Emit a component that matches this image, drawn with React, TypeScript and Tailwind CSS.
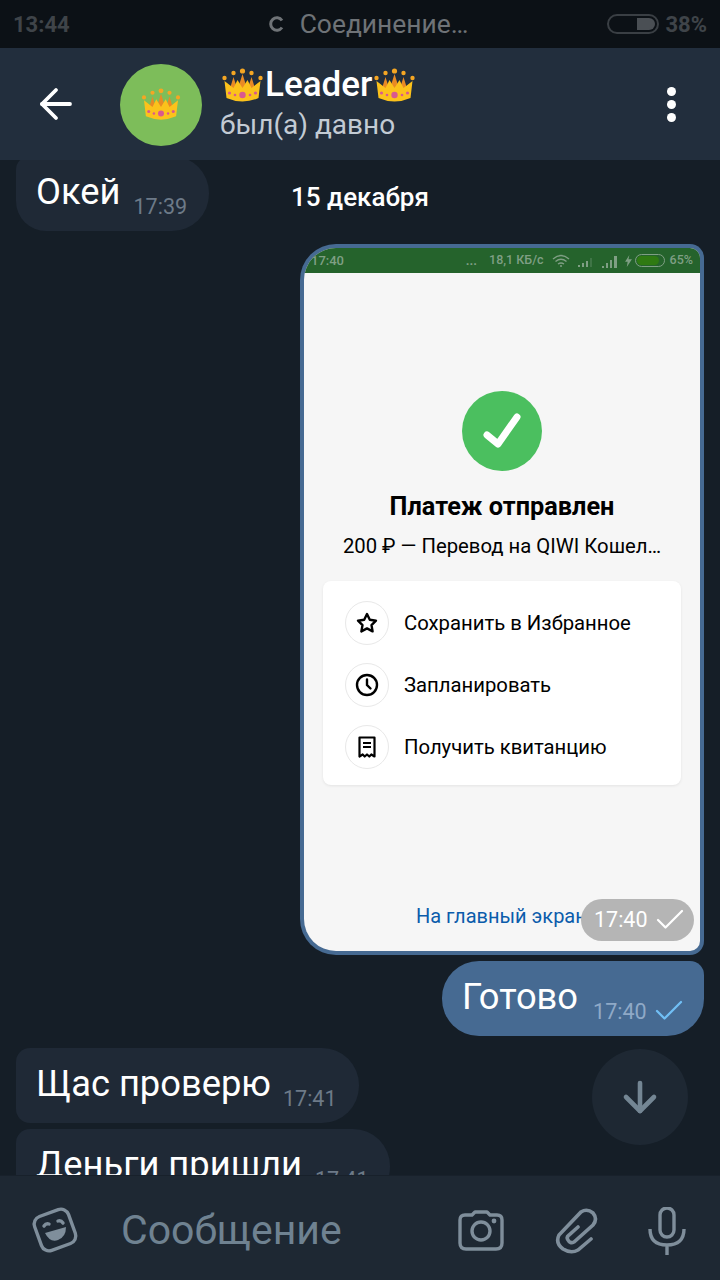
import { ArrowDown, ArrowLeft, Check } from "lucide-react";

const Crown = ({ className }: { className: string }) => (
  <svg viewBox="0 0 44 36" className={className}>
    <g fill="#f5a623">
      <circle cx="4" cy="10" r="2.2" />
      <circle cx="13" cy="5" r="2.2" />
      <circle cx="22" cy="3" r="2.6" />
      <circle cx="31" cy="5" r="2.2" />
      <circle cx="40" cy="10" r="2.2" />
    </g>
    <path d="M13 9 17 22H9zM31 9 35 22H27zM22 6 27 22H17z" fill="#e98a24" />
    <path d="M4 13 13 20 17 12 22 20 27 12 31 20 40 13 38 30Q22 37 6 30Z" fill="#fcc21b" />
    <circle cx="22" cy="27" r="3.2" fill="#d9598f" />
    <g fill="#d9598f">
      <circle cx="9" cy="25" r="1.6" />
      <circle cx="14.5" cy="27" r="1.3" />
      <circle cx="29.5" cy="27" r="1.3" />
      <circle cx="35" cy="25" r="1.6" />
    </g>
  </svg>
);

const Time = ({ value, className }: { value: string; className: string }) => (
  <span className={`text-[21.5px] leading-none ${className}`}>{value}</span>
);

const PayRow = ({ label, children }: { label: string; children: React.ReactNode }) => (
  <div className="flex h-[44px] items-center gap-[15px]">
    <div className="flex h-[44px] w-[44px] items-center justify-center rounded-full border border-[#e8e8e8]">
      {children}
    </div>
    <span className="text-[20.3px] text-black">{label}</span>
  </div>
);

const PaymentShot = () => (
  <div className="relative ml-[300px] mt-[13px] h-[711px] w-[404px] shrink-0 rounded-tl-[36px] rounded-tr-[14px] rounded-bl-[36px] rounded-br-[14px] bg-[#466a92] p-[4px]">
    <div className="flex h-full flex-col overflow-hidden rounded-tl-[32px] rounded-tr-[10px] rounded-bl-[32px] rounded-br-[10px] bg-[#f6f6f6]">
      {/* Status bar of the phone in the screenshot */}
      <div className="flex h-[25px] shrink-0 items-center bg-[#25632c] pl-[7px] pr-[7px] text-[13px] font-medium text-[#7f9f84]">
        <span>17:40</span>
        <span className="ml-auto font-bold">...</span>
        <span className="ml-[12px] text-[12.5px]">18,1 КБ/с</span>
        <svg viewBox="0 0 18 14" className="ml-[8px] h-[14px] w-[18px]" fill="none" stroke="#7f9f84" strokeWidth="1.4">
          <path d="M1 5Q9-2 17 5M3.5 7.5Q9 3 14.5 7.5M6 10Q9 8 12 10" />
          <circle cx="9" cy="12" r="1" fill="#7f9f84" stroke="none" />
        </svg>
        <svg viewBox="0 0 18 12" className="ml-[7px] h-[12px] w-[18px]" fill="#7f9f84">
          <path d="M1 10h2v2H1zM5 8h2v4H5zM9 6h2v6H9z" />
          <path d="M13 3h2v9h-2z" opacity="0.3" />
        </svg>
        <svg viewBox="0 0 18 14" className="ml-[6px] h-[14px] w-[18px]" fill="#7f9f84">
          <path d="M1 12h2v2H1zM5 9h2v5H5zM9 6h2v8H9zM13 2h3v12h-3z" />
        </svg>
        <svg viewBox="0 0 8 14" className="ml-[6px] h-[12px] w-[7px]" fill="#7f9f84">
          <path d="M5 0 0 8h3l-1 6 6-9H4z" />
        </svg>
        <div className="ml-[3px] h-[13px] w-[30px] shrink-0 rounded-full border border-[#7f9f84] p-[1px]">
          <div className="h-full w-[22px] rounded-full bg-[#2f7a12]" />
        </div>
        <span className="ml-[5px] text-[12.5px]">65%</span>
      </div>

      <div className="flex flex-1 flex-col items-center">
        <div className="mt-[118px] h-[80px] w-[80px] rounded-full bg-[#4bbf5f]">
          <svg viewBox="0 0 80 80" className="h-[80px] w-[80px]" fill="none" stroke="#fff" strokeWidth="7" strokeLinecap="round" strokeLinejoin="round">
            <path d="M25 44l11 9 19-27" />
          </svg>
        </div>
        <p className="mt-[20px] text-[25.3px] leading-[32px] font-bold text-black">Платеж отправлен</p>
        <p className="mt-[9px] text-[20.3px] leading-[28px] text-black">200 ₽ — Перевод на QIWI Кошел…</p>

        <div className="mt-[21px] flex h-[204px] w-[358px] flex-col gap-[18px] rounded-lg bg-white px-[22px] py-[20px] shadow-[0_1px_3px_rgba(0,0,0,0.08)]">
          <PayRow label="Сохранить в Избранное">
            <svg viewBox="0 0 24 24" className="h-[24px] w-[24px]" fill="none" stroke="#000" strokeWidth="2.4" strokeLinejoin="round">
              <path d="M12 3l2.8 5.8 6.2.9-4.5 4.4 1.1 6.3-5.6-3-5.6 3 1.1-6.3L3 9.7l6.2-.9z" />
            </svg>
          </PayRow>
          <PayRow label="Запланировать">
            <svg viewBox="0 0 24 24" className="h-[24px] w-[24px]" fill="none" stroke="#000" strokeWidth="2.4" strokeLinecap="round">
              <circle cx="12" cy="12" r="10" />
              <path d="M12 6.5V12l3.5 3.5" />
            </svg>
          </PayRow>
          <PayRow label="Получить квитанцию">
            <svg viewBox="0 0 24 24" className="h-[24px] w-[24px]" fill="none" stroke="#000" strokeWidth="2.2">
              <path d="M4.5 2.5h15v19l-3.2-2-2 2-2.3-2-2.3 2-2-2-3.2 2z" strokeLinejoin="round" />
              <path d="M8 8h8M8 12h8" />
            </svg>
          </PayRow>
        </div>

        <p className="mt-[117px] ml-[112px] self-start text-[20px] leading-[28px] whitespace-nowrap text-[#0b5cab]">
          На главный экран
        </p>
      </div>
    </div>

    {/* Time pill over the picture */}
    <div className="absolute right-[10px] bottom-[14px] flex h-[42px] w-[113px] items-center gap-[4px] rounded-full bg-[#b5b5b5] pl-[13px]">
      <Time value="17:40" className="text-white" />
      <Check className="h-[36px] w-[36px] text-white" strokeWidth={1.5} />
    </div>
  </div>
);

export default function App() {
  return (
    <div className="flex h-[1280px] w-[720px] flex-col overflow-hidden bg-[#151e27] font-['Roboto',sans-serif]">
      {/* Phone status bar */}
      <div className="relative flex h-[48px] shrink-0 items-center bg-[#0c1116] pl-[13px] pr-[13px]">
        <span className="text-[22px] font-bold text-[#3f4449]">13:44</span>
        <div className="ml-[198px] flex items-center gap-[16px] text-[#6f7377]">
          <svg viewBox="0 0 16 16" className="h-[16px] w-[16px]" fill="none" stroke="#6f7377" strokeWidth="3">
            <path d="M14 4.5A6.2 6.2 0 1 0 14 11.5" />
          </svg>
          <span className="text-[26.4px] leading-none">Соединение…</span>
        </div>
        <div className="ml-auto flex items-center gap-[6px]">
          <div className="flex h-[20px] w-[52px] justify-end rounded-full border-2 border-[#3a3f44] p-[2px]">
            <div className="h-full w-[18px] rounded-r-full bg-[#4a4f54]" />
          </div>
          <span className="text-[22px] font-bold text-[#3f4449]">38%</span>
        </div>
      </div>

      {/* Chat header */}
      <div className="z-10 flex h-[112px] shrink-0 items-center bg-[#222e3d]">
        <ArrowLeft className="ml-[32px] h-[48px] w-[48px] text-white" strokeWidth={1.9} />
        <div className="mt-[2px] ml-[40px] flex h-[82px] w-[82px] items-center justify-center rounded-full bg-[#7dbd5a]">
          <Crown className="h-[34px] w-[42px]" />
        </div>
        <div className="ml-[18px] flex flex-col self-start pt-[16px]">
          <div className="flex h-[40px] items-center">
            <Crown className="mt-[3px] h-[36px] w-[45px]" />
            <span className="text-[35px] leading-none font-medium text-white">Leader</span>
            <Crown className="mt-[3px] h-[36px] w-[45px]" />
          </div>
          <span className="mt-[3px] text-[28px] leading-[36px] text-[#c3cbd4]">был(а) давно</span>
        </div>
        <div className="ml-auto mr-[44px] flex flex-col gap-[4px]">
          <div className="h-[9px] w-[9px] rounded-full bg-white" />
          <div className="h-[9px] w-[9px] rounded-full bg-white" />
          <div className="h-[9px] w-[9px] rounded-full bg-white" />
        </div>
      </div>

      {/* Messages */}
      <div className="relative flex min-h-0 flex-1 flex-col overflow-hidden">
        <div className="-mt-[4px] ml-[16px] flex h-[75px] w-[193px] shrink-0 items-center rounded-tl-[14px] rounded-tr-[37px] rounded-bl-[30px] rounded-br-[37px] bg-[#1f2936] pl-[20px]">
          <span className="-mt-[2px] text-[36.3px] leading-none text-white">Окей</span>
          <Time value="17:39" className="mt-[26px] ml-[13px] text-[#6d7a88]" />
        </div>

        <PaymentShot />

        <div className="mt-[6px] ml-[442px] flex h-[75px] w-[262px] shrink-0 items-center rounded-tl-[37px] rounded-tr-[14px] rounded-bl-[37px] rounded-br-[37px] bg-[#466a92] pl-[20px]">
          <span className="-mt-[2px] text-[36.3px] leading-none text-white">Готово</span>
          <Time value="17:40" className="mt-[26px] ml-[15px] text-[#8fa9c7]" />
          <Check className="mt-[24px] ml-[4px] h-[36px] w-[36px] text-[#71bff5]" strokeWidth={1.5} />
        </div>

        <div className="mt-[12px] ml-[16px] flex h-[75px] w-[343px] shrink-0 items-center rounded-[14px] rounded-tr-[37px] rounded-br-[37px] bg-[#1f2936] pl-[20px]">
          <span className="-mt-[2px] text-[36.3px] leading-none text-white">Щас проверю</span>
          <Time value="17:41" className="mt-[26px] ml-[12px] text-[#6d7a88]" />
        </div>

        <div className="mt-[6px] ml-[16px] flex h-[75px] w-[374px] shrink-0 items-center rounded-[14px] rounded-tr-[37px] rounded-br-[37px] bg-[#1f2936] pl-[20px]">
          <span className="-mt-[2px] text-[36.3px] leading-none text-white">Деньги пришли</span>
          <Time value="17:41" className="mt-[26px] ml-[13px] text-[#6d7a88]" />
        </div>

        {/* Floating date */}
        <span className="absolute top-[22px] left-0 w-full text-center text-[26px] leading-[30px] font-medium text-white">
          15 декабря
        </span>

        {/* Scroll down button */}
        <div className="absolute top-[889px] left-[592px] flex h-[96px] w-[96px] items-center justify-center rounded-full bg-[#1e2833]">
          <ArrowDown className="h-[48px] w-[48px] text-[#748694]" strokeWidth={2.3} />
        </div>
      </div>

      {/* Input bar */}
      <div className="z-10 flex h-[105px] shrink-0 items-center border-t border-[#18212b] bg-[#1e2833]">
        <svg viewBox="0 0 48 48" className="mt-[4px] ml-[31px] h-[48px] w-[48px] shrink-0" fill="none" stroke="#7f8e9b" strokeWidth="3.4" strokeLinecap="round">
          <rect x="6" y="6" width="36" height="36" rx="8" transform="rotate(-20 24 24)" />
          <path d="M13 20q2-3 5-2M27 15q3-1 5 2" />
          <path d="M14 27l21-6q0 10-8 13t-13-7z" fill="#7f8e9b" stroke="none" />
        </svg>
        <span className="mt-[4px] ml-[42px] w-[336px] shrink-0 text-[41px] leading-none text-[#6f8291]">Сообщение</span>
        <svg viewBox="0 0 48 48" className="mt-[4px] h-[48px] w-[48px] shrink-0" fill="none" stroke="#7f8e9b" strokeWidth="3.4">
          <path d="M8 9h7l3-3h12l3 3h7q5 0 5 5v23q0 6-6 6H9q-6 0-6-6V14q0-5 5-5z" strokeLinejoin="round" />
          <circle cx="24" cy="25" r="9" />
          <circle cx="37" cy="15" r="2.4" fill="#7f8e9b" stroke="none" />
        </svg>
        <svg viewBox="0 0 48 48" className="mt-[4px] ml-[48px] h-[48px] w-[48px] shrink-0" fill="none" stroke="#7f8e9b" strokeWidth="3.6" strokeLinecap="round">
          <path d="M38 33 25 44Q18 48 10 43 2 37 6 29L28 6Q34 2 40 7 45 13 40 19L21 36Q17 38 15 34 13 31 16 29L25 21" />
        </svg>
        <svg viewBox="0 0 48 48" className="mt-[6px] ml-[42px] h-[48px] w-[48px] shrink-0" fill="none" stroke="#7f8e9b" strokeWidth="3.4">
          <rect x="17" y="1" width="14" height="29" rx="7" />
          <path d="M7 22q0 16 17 16t17-16M24 38v10" />
        </svg>
      </div>
    </div>
  );
}
